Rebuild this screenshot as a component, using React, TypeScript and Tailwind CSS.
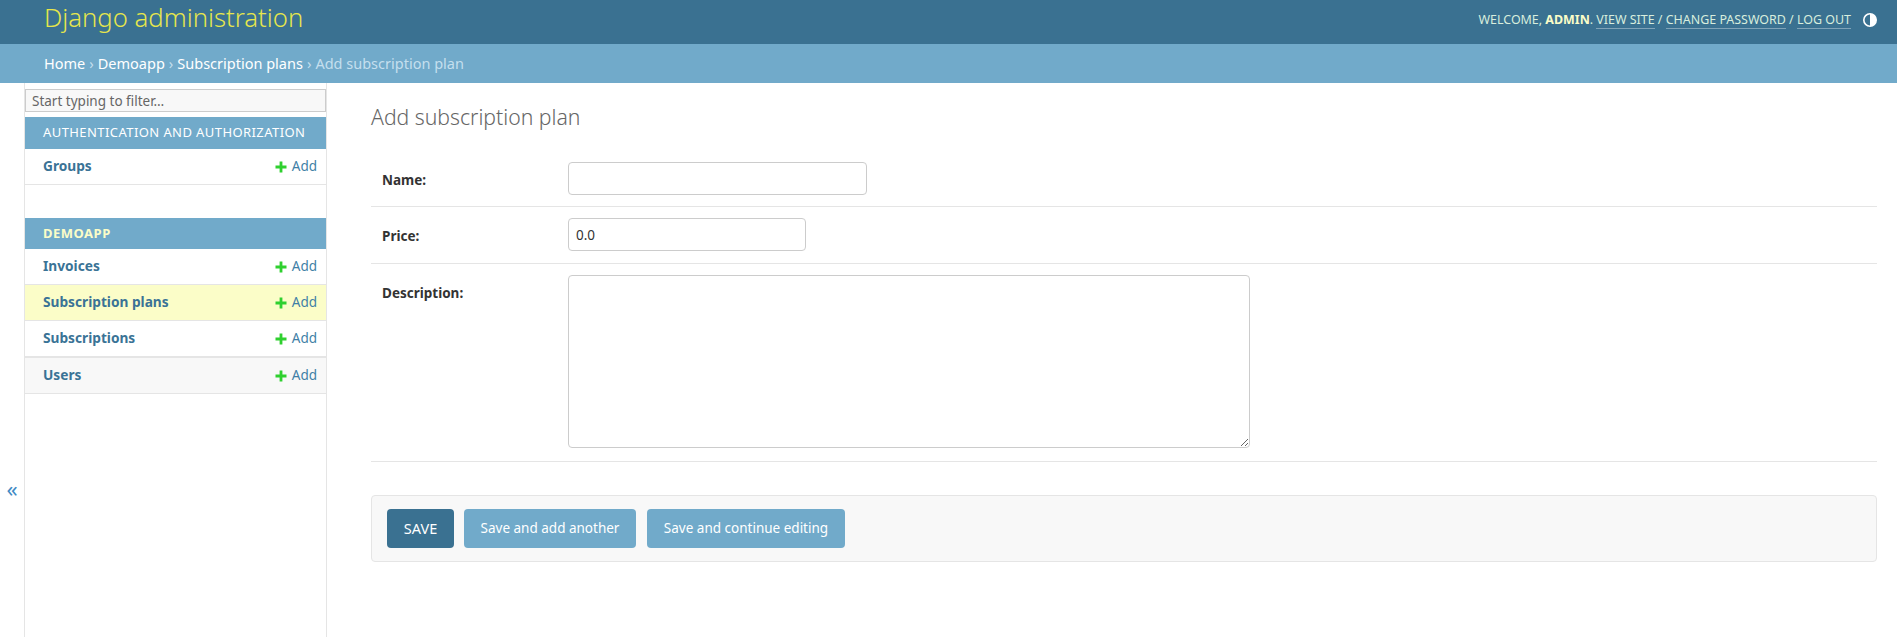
import { ReactNode } from 'react'

const font = 'font-["Noto_Sans",sans-serif]'

function AddIcon() {
  return (
    <svg width="12" height="12" viewBox="0 0 12 12" className="shrink-0">
      <path d="M4.6 0.5h2.8v4.1h4.1v2.8H7.4v4.1H4.6V7.4H0.5V4.6h4.1z" fill="#2fd02f" />
    </svg>
  )
}

function ContrastIcon() {
  return (
    <svg width="16" height="16" viewBox="0 0 16 16">
      <circle cx="8" cy="8" r="6.2" fill="none" stroke="#fff" strokeWidth="1.6" />
      <path d="M8 1.8a6.2 6.2 0 0 1 0 12.4z" fill="#fff" />
    </svg>
  )
}

function ModelRow({ name, bg, thick }: { name: string; bg?: string; thick?: boolean }) {
  return (
    <div className={`flex items-center justify-between border-b border-[#e5e5e5] pl-[18px] pr-[9px] ${bg ?? ''} ${thick ? 'h-[37px] border-t' : 'h-[36px]'}`}>
      <a className="text-[13.7px] font-bold text-[#3a7396]">{name}</a>
      <span className="flex items-center gap-[5px] text-[13.5px] text-[#3f7fa6]">
        <AddIcon />
        Add
      </span>
    </div>
  )
}

function FormRow({ label, children, h }: { label: string; children: ReactNode; h: string }) {
  return (
    <div className={`flex border-b border-[#e5e5e5] pt-[11px] ${h}`}>
      <label className="w-[197px] pl-[11px] pt-[8px] text-[13.5px] font-bold text-[#333]">{label}</label>
      {children}
    </div>
  )
}

export default function App() {
  return (
    <div className={`flex h-[637px] flex-col overflow-hidden bg-white ${font}`}>
      <header className="flex h-[44px] items-center justify-between bg-[#3a7191] pl-[44px] pr-[19px]">
        <h1 className="pb-[8px] text-[25.7px] font-light leading-none text-[#e6e64c]">Django administration</h1>
        <div className="flex items-center gap-[11px] pb-[3px] text-[12.45px] text-[#d8eedd]">
          <span>
            WELCOME, <b className="text-[#fbfdc8]">ADMIN</b>.{' '}
            <a className="border-b border-[#7fa3b8]">VIEW SITE</a> /{' '}
            <a className="border-b border-[#7fa3b8]">CHANGE PASSWORD</a> /{' '}
            <a className="border-b border-[#7fa3b8]">LOG OUT</a>
          </span>
          <ContrastIcon />
        </div>
      </header>

      <nav className="flex h-[39px] items-center bg-[#71aaca] pl-[44px] text-[14.5px] text-white">
        Home<span className="mx-[4px] text-[#c4dfee]">›</span>
        Demoapp<span className="mx-[4px] text-[#c4dfee]">›</span>
        Subscription plans<span className="mx-[4px] text-[#c4dfee]">›</span>
        <span className="text-[#c4dfee]">Add subscription plan</span>
      </nav>

      <div className="flex min-h-0 flex-1">
        <button className="flex w-[25px] shrink-0 items-start justify-center border-r border-[#e5e5e5] pt-[389px] text-[22px] text-[#3f8ac4]">
          «
        </button>

        <aside className="w-[302px] shrink-0 border-r border-[#e5e5e5] pt-[6px]">
          <input
            placeholder="Start typing to filter…"
            className="mb-[5px] block h-[23px] w-full border border-[#cccccc] bg-[#f8f8f8] px-[6px] text-[13.5px] outline-none placeholder:text-[#666]"
          />
          <div className="flex h-[32px] items-center bg-[#71aaca] pl-[18px] text-[13px] tracking-[0.42px] text-white">
            AUTHENTICATION AND AUTHORIZATION
          </div>
          <ModelRow name="Groups" />
          <div className="mt-[33px] flex h-[31px] items-center bg-[#71aaca] pl-[18px] text-[13px] font-bold tracking-[0.5px] text-[#fbfdc8]">
            DEMOAPP
          </div>
          <ModelRow name="Invoices" />
          <ModelRow name="Subscription plans" bg="bg-[#fbfdc8]" />
          <ModelRow name="Subscriptions" />
          <ModelRow name="Users" bg="bg-[#f8f8f8]" thick />
        </aside>

        <main className="min-w-0 flex-1 pl-[44px] pr-[20px]">
          <h2 className="pt-[20px] text-[21.2px] font-light leading-[28px] text-[#666]">Add subscription plan</h2>
          <div className="mt-[20px]">
            <FormRow label="Name:" h="h-[56px]">
              <input className="h-[33px] w-[299px] rounded border border-[#cccccc] px-[7px] text-[13.5px]" />
            </FormRow>
            <FormRow label="Price:" h="h-[57px]">
              <input defaultValue="0.0" className="h-[33px] w-[238px] rounded border border-[#cccccc] px-[7px] text-[13.5px] text-[#333]" />
            </FormRow>
            <FormRow label="Description:" h="h-[198px]">
              <textarea className="h-[173px] w-[682px] rounded border border-[#cccccc] px-[7px] text-[13.5px]" />
            </FormRow>
          </div>
          <div className="mt-[33px] flex h-[67px] items-center gap-[10px] rounded border border-[#e5e5e5] bg-[#f8f8f8] pl-[15px]">
            <button className="h-[39px] w-[67px] rounded bg-[#3a7191] text-[14.5px] text-white">SAVE</button>
            <button className="mr-px h-[39px] w-[172px] rounded bg-[#71aaca] text-[13.5px] text-white">Save and add another</button>
            <button className="h-[39px] w-[198px] rounded bg-[#71aaca] text-[13.5px] text-white">Save and continue editing</button>
          </div>
        </main>
      </div>
    </div>
  )
}
